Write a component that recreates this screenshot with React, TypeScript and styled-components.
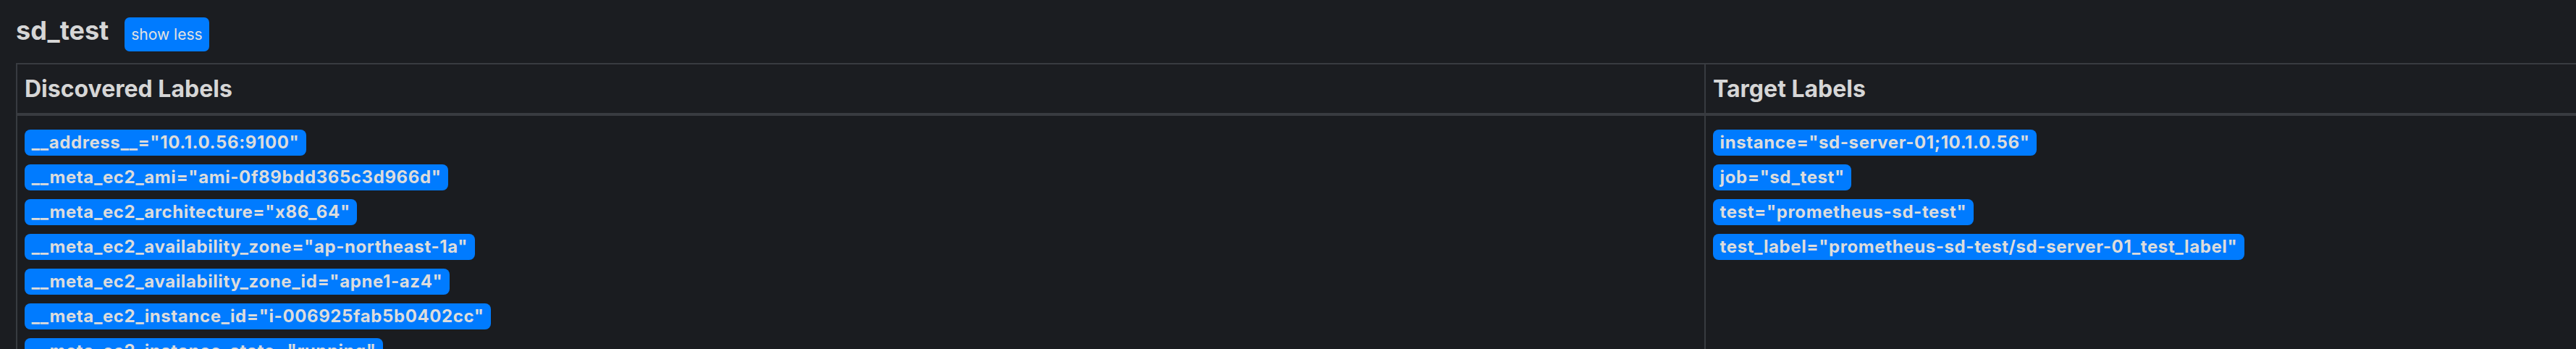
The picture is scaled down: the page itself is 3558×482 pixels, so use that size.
import React from "react";
import styled, { createGlobalStyle } from "styled-components";

const GlobalStyle = createGlobalStyle`
  html, body {
    margin: 0;
    padding: 0;
    background: #1b1d21;
    overflow: hidden;
  }
  body {
    font-family: Inter, "Noto Sans", sans-serif;
    color: #d5d5d5;
  }
`;

const Page = styled.div`
  padding: 21px 0 0 22px;
  height: 482px;
  box-sizing: border-box;
  overflow: hidden;
`;

const Header = styled.div`
  display: flex;
  align-items: baseline;
  gap: 22px;
  margin-bottom: 16px;
`;

const Title = styled.h3`
  margin: 0;
  font-size: 36px;
  font-weight: 700;
  line-height: 43px;
  color: #d6d6d6;
`;

const ToggleButton = styled.button`
  font-family: inherit;
  font-size: 21px;
  line-height: 31px;
  padding: 8px 9px;
  border: none;
  border-radius: 7px;
  background: #007bff;
  color: #e2e2e2;
`;

const Table = styled.table`
  border-collapse: separate;
  border-spacing: 0;
  table-layout: fixed;
  width: 3600px;
  border-top: 2px solid #383b40;
  border-left: 2px solid #383b40;
`;

const HeadCell = styled.th<{ $w?: number }>`
  width: ${(p) => (p.$w ? `${p.$w}px` : "auto")};
  box-sizing: border-box;
  text-align: left;
  font-size: 32px;
  font-weight: 700;
  line-height: 48px;
  padding: 10px 10px 9px;
  color: #d6d6d6;
  border-bottom: 4px solid #383b40;
  &:first-child {
    border-right: 2px solid #383b40;
  }
`;

const Cell = styled.td`
  vertical-align: top;
  padding: 19px 10px 10px;
  background: #1a1c20;
  &:first-child {
    border-right: 2px solid #383b40;
  }
`;

const LabelList = styled.div`
  display: flex;
  flex-direction: column;
  align-items: flex-start;
  gap: 12px;
`;

const Badge = styled.span`
  display: inline-block;
  font-size: 24px;
  font-weight: 700;
  line-height: 24px;
  padding: 6px 9.6px;
  border-radius: 8px;
  background: #007bff;
  color: #dcdcdc;
  white-space: nowrap;
  letter-spacing: 0.6px;
`;

const discovered: [string, string][] = [
  ["__address__", "10.1.0.56:9100"],
  ["__meta_ec2_ami", "ami-0f89bdd365c3d966d"],
  ["__meta_ec2_architecture", "x86_64"],
  ["__meta_ec2_availability_zone", "ap-northeast-1a"],
  ["__meta_ec2_availability_zone_id", "apne1-az4"],
  ["__meta_ec2_instance_id", "i-006925fab5b0402cc"],
  ["__meta_ec2_instance_state", "running"],
];

const target: [string, string][] = [
  ["instance", "sd-server-01;10.1.0.56"],
  ["job", "sd_test"],
  ["test", "prometheus-sd-test"],
  ["test_label", "prometheus-sd-test/sd-server-01_test_label"],
];

function Labels({ items }: { items: [string, string][] }) {
  return (
    <LabelList>
      {items.map(([k, v]) => (
        <Badge key={k}>{`${k}="${v}"`}</Badge>
      ))}
    </LabelList>
  );
}

export default function App() {
  return (
    <Page>
      <GlobalStyle />
      <Header>
        <Title>sd_test</Title>
        <ToggleButton>show less</ToggleButton>
      </Header>
      <Table>
        <thead>
          <tr>
            <HeadCell $w={2332}>Discovered Labels</HeadCell>
            <HeadCell>Target Labels</HeadCell>
          </tr>
        </thead>
        <tbody>
          <tr>
            <Cell>
              <Labels items={discovered} />
            </Cell>
            <Cell>
              <Labels items={target} />
            </Cell>
          </tr>
        </tbody>
      </Table>
    </Page>
  );
}
